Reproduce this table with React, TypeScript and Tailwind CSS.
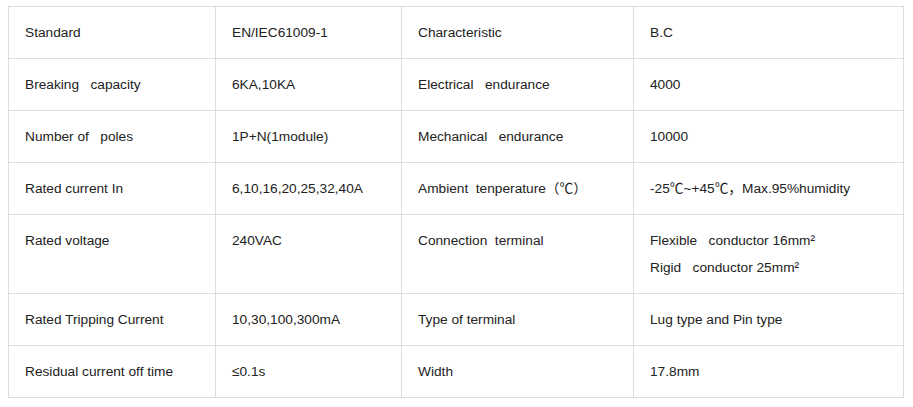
import React from 'react'

const rows: [string, string[], string, string[]][] = [
  ['Standard', ['EN/IEC61009-1'], 'Characteristic', ['B.C']],
  ['Breaking\u00a0\u00a0 capacity', ['6KA,10KA'], 'Electrical\u00a0\u00a0 endurance', ['4000']],
  ['Number of\u00a0\u00a0 poles', ['1P+N(1module)'], 'Mechanical\u00a0\u00a0 endurance', ['10000']],
  ['Rated current In', ['6,10,16,20,25,32,40A'], 'Ambient\u00a0 tenperature（℃）', ['-25℃~+45℃，Max.95%humidity']],
  ['Rated voltage', ['240VAC'], 'Connection\u00a0 terminal', ['Flexible\u00a0\u00a0 conductor 16mm²', 'Rigid\u00a0\u00a0 conductor 25mm²']],
  ['Rated Tripping Current', ['10,30,100,300mA'], 'Type of terminal', ['Lug type and Pin type']],
  ['Residual current off time', ['≤0.1s'], 'Width', ['17.8mm']],
]

const Cell = ({ lines }: { lines: string[] }) => (
  <td className="border border-[#dddddd] px-4 py-3 align-top">
    {lines.map((l) => (
      <div key={l} className="leading-[27px]">
        {l}
      </div>
    ))}
  </td>
)

export default function App() {
  return (
    <div
      className="min-h-[407px] bg-white pl-2 pt-[6px] text-[13.7px] text-[#222222]"
      style={{ fontFamily: '"Liberation Sans", Arial, "Noto Sans CJK SC", sans-serif' }}
    >
      <table className="w-[895px] table-fixed border-collapse">
        <colgroup>
          <col className="w-[207px]" />
          <col className="w-[186px]" />
          <col className="w-[232px]" />
          <col className="w-[270px]" />
        </colgroup>
        <tbody>
          {rows.map(([a, b, c, d]) => (
            <tr key={a}>
              <Cell lines={[a]} />
              <Cell lines={b} />
              <Cell lines={[c]} />
              <Cell lines={d} />
            </tr>
          ))}
        </tbody>
      </table>
    </div>
  )
}
